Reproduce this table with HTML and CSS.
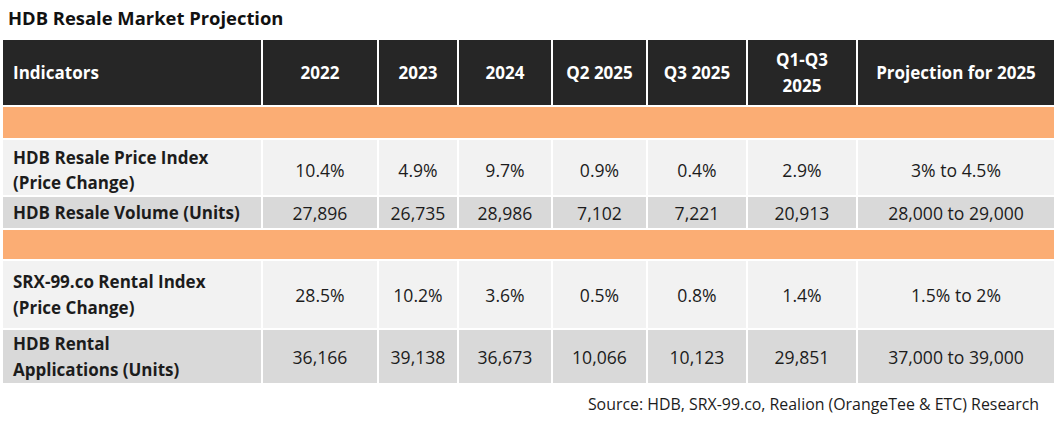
FILE: index.html
```html
<!DOCTYPE html>
<html>
<head>
<meta charset="utf-8">
<link rel="stylesheet" href="styles.css">
</head>
<body>
<div class="page">
  <div class="title">HDB Resale Market Projection</div>
  <table class="grid">
    <colgroup>
      <col class="c1"><col class="c2"><col class="c3"><col class="c4"><col class="c5"><col class="c6"><col class="c7"><col class="c8">
    </colgroup>
    <tr class="head">
      <td class="label">Indicators</td>
      <td>2022</td>
      <td>2023</td>
      <td>2024</td>
      <td>Q2 2025</td>
      <td>Q3 2025</td>
      <td>Q1-Q3<br>2025</td>
      <td>Projection for 2025</td>
    </tr>
    <tr class="band band1"><td colspan="8"></td></tr>
    <tr class="light r-price">
      <td class="label">HDB Resale Price Index<br>(Price Change)</td>
      <td>10.4%</td><td>4.9%</td><td>9.7%</td><td>0.9%</td><td>0.4%</td><td>2.9%</td><td>3% to 4.5%</td>
    </tr>
    <tr class="dark r-vol">
      <td class="label">HDB Resale Volume (Units)</td>
      <td>27,896</td><td>26,735</td><td>28,986</td><td>7,102</td><td>7,221</td><td>20,913</td><td>28,000 to 29,000</td>
    </tr>
    <tr class="band band2"><td colspan="8"></td></tr>
    <tr class="light r-srx">
      <td class="label">SRX-99.co Rental Index<br>(Price Change)</td>
      <td>28.5%</td><td>10.2%</td><td>3.6%</td><td>0.5%</td><td>0.8%</td><td>1.4%</td><td>1.5% to 2%</td>
    </tr>
    <tr class="dark r-rent">
      <td class="label">HDB Rental<br>Applications (Units)</td>
      <td>36,166</td><td>39,138</td><td>36,673</td><td>10,066</td><td>10,123</td><td>29,851</td><td>37,000 to 39,000</td>
    </tr>
  </table>
  <div class="source">Source: HDB, SRX-99.co, Realion (OrangeTee &amp; ETC) Research</div>
</div>
</body>
</html>
```
FILE: styles.css
```css
html, body {
  margin: 0;
  padding: 0;
  background: #ffffff;
}
.page {
  width: 1056px;
  font-family: "Open Sans", Lato, sans-serif;
  color: #1c1c1c;
}
.title {
  font-weight: 700;
  font-size: 18.4px;
  line-height: 24px;
  padding: 6px 0 0 8px;
  height: 38px;
  box-sizing: border-box;
  color: #111;
}
.grid {
  border-collapse: separate;
  border-spacing: 2px;
  table-layout: fixed;
  width: 1055px;
  margin: 0 0 0 1px;
  font-size: 17.6px;
  line-height: 26px;
}
.c1 { width: 258px; }
.c2 { width: 114px; }
.c3 { width: 78px; }
.c4 { width: 92px; }
.c5 { width: 93px; }
.c6 { width: 98px; }
.c7 { width: 108px; }
.c8 { width: 196px; }
.grid td {
  padding: 0;
  text-align: center;
  vertical-align: middle;
}
.grid td.label {
  text-align: left;
  padding-left: 10px;
  font-weight: 700;
  font-size: 17px;
}
.head td {
  background: #262626;
  color: #ffffff;
  font-weight: 700;
  font-size: 17px;
  height: 65px;
}
.band td {
  background: #fbad74;
}
.band1 td { height: 31px; }
.band2 td { height: 29px; }
.light td { background: #f2f2f2; }
.dark td { background: #d9d9d9; }
.r-price td { height: 49px; padding-top: 6px; line-height: 24.5px; }
.r-vol td { height: 31px; }
.r-srx td { height: 67px; }
.r-rent td { height: 53px; }
.source {
  text-align: right;
  padding-right: 17px;
  margin-top: 9px;
  font-size: 15.9px;
  line-height: 20px;
  color: #1c1c1c;
}
```
